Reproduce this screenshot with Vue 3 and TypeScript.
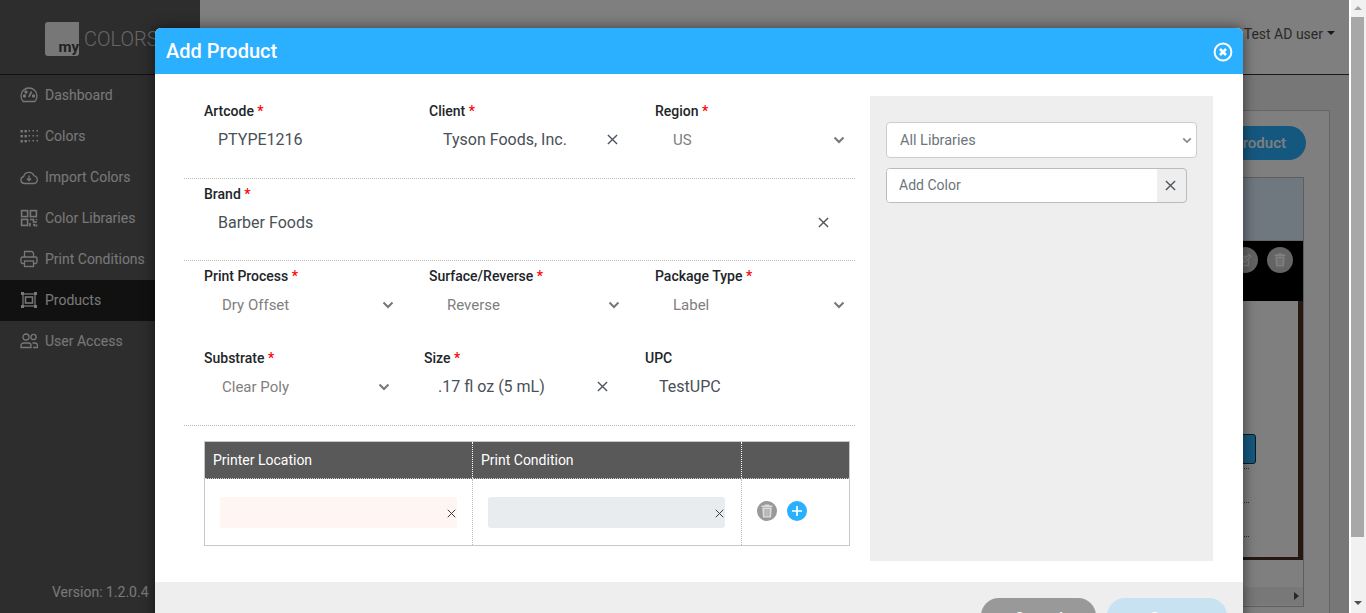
<script setup lang="ts">
interface NavItem {
  label: string;
  icon: string;
  active?: boolean;
}

const navItems: NavItem[] = [
  { label: 'Dashboard', icon: 'gauge' },
  { label: 'Colors', icon: 'dots' },
  { label: 'Import Colors', icon: 'cloud' },
  { label: 'Color Libraries', icon: 'qr' },
  { label: 'Print Conditions', icon: 'printer' },
  { label: 'Products', icon: 'frame', active: true },
  { label: 'User Access', icon: 'users' },
];

const dotPositions = [1, 5, 9, 13, 17];
</script>

<template>
  <div class="page">
    <aside class="sidebar">
      <div class="brand-bar">
        <div class="logo-box"><span>my</span></div>
        <span class="logo-word">COLORS</span>
      </div>
      <nav class="nav">
        <div v-for="item in navItems" :key="item.label" :class="['nav-item', { active: item.active }]">
          <svg class="nav-icon" viewBox="0 0 18 18" fill="none" stroke="currentColor" stroke-width="1.3">
            <template v-if="item.icon === 'gauge'">
              <path d="M3.2 15.5A8 8 0 1 1 14.8 15.5Z" />
              <path d="M9 11L11.5 5.5" stroke-width="1.8" />
              <circle cx="4.5" cy="10" r="1" fill="currentColor" />
              <circle cx="6" cy="6" r="1" fill="currentColor" />
              <circle cx="13.5" cy="10" r="1" fill="currentColor" />
            </template>
            <template v-else-if="item.icon === 'dots'">
              <template v-for="x in dotPositions" :key="x">
                <rect v-for="y in [3, 8, 13]" :key="y" :x="x - 0.5" :y="y" :width="x < 9 ? 2.4 : 1.5" :height="x < 9 ? 2.4 : 1.5" fill="currentColor" stroke="none" />
              </template>
            </template>
            <template v-else-if="item.icon === 'cloud'">
              <path d="M4.5 15.5A3.5 3.5 0 0 1 3.6 8.6 5.5 5.5 0 0 1 14 7.8 3.9 3.9 0 0 1 14 15.5Z" />
              <path d="M9 7.5V12.5M6.8 10.5L9 12.7 11.2 10.5" />
            </template>
            <template v-else-if="item.icon === 'qr'">
              <rect x="1.6" y="1.6" width="6" height="6" stroke-width="1.6" />
              <rect x="10.4" y="1.6" width="6" height="6" stroke-width="1.6" />
              <rect x="1.6" y="10.4" width="6" height="6" stroke-width="1.6" />
              <path d="M10 10.5h3.5v2.5H17M10 14v3.5M13 15.5h1.5v2M16.5 10v1M16.5 15.5v2" stroke-width="1.6" />
            </template>
            <template v-else-if="item.icon === 'printer'">
              <path d="M4.5 7V1.5H12L13.5 3V7" />
              <rect x="1" y="7" width="16" height="6.5" rx="1.5" />
              <rect x="4.5" y="11" width="9" height="5.5" fill="#5a5a5a" />
            </template>
            <template v-else-if="item.icon === 'frame'">
              <rect x="3" y="3" width="12" height="12" />
              <rect x="5.5" y="6" width="7" height="6" stroke-width="1.6" />
              <rect x="1" y="1" width="3" height="3" fill="currentColor" stroke="none" />
              <rect x="14" y="1" width="3" height="3" fill="currentColor" stroke="none" />
              <rect x="1" y="14" width="3" height="3" fill="currentColor" stroke="none" />
              <rect x="14" y="14" width="3" height="3" fill="currentColor" stroke="none" />
            </template>
            <template v-else>
              <circle cx="6" cy="5" r="3" />
              <path d="M1 15.5V13.5A2.5 2.5 0 0 1 3.5 11H8.5A2.5 2.5 0 0 1 11 13.5V15.5Z" />
              <circle cx="13.5" cy="5" r="2.6" />
              <path d="M12.5 11H15A2.5 2.5 0 0 1 17.5 13.5V15.5H13" />
            </template>
          </svg>
          <span>{{ item.label }}</span>
        </div>
      </nav>
      <div class="version">Version: 1.2.0.4</div>
    </aside>

    <main class="main">
      <header class="topbar">
        <span class="user">Test AD user</span>
        <span class="caret"></span>
      </header>
      <section class="content">
        <div class="card">
          <div class="card-actions">
            <button class="add-btn">Add Product</button>
          </div>
          <div class="list-box">
            <div class="list-head"></div>
            <div class="list-row">
              <span class="row-btn">
                <svg width="14" height="14" viewBox="0 0 14 14" fill="none" stroke="#fff" stroke-width="1.4">
                  <path d="M1.5 3.5H8M1.5 3.5V12.5H10.5V7" />
                  <path d="M5 9.5L5.6 7L11 1.5L12.8 3.2L7.4 8.8Z" />
                </svg>
              </span>
              <span class="row-btn">
                <svg width="12" height="14" viewBox="0 0 12 14" fill="#fff">
                  <path d="M4 0.5H8L8.6 1.6H11.5V3H0.5V1.6H3.4Z" />
                  <path fill-rule="evenodd" d="M1.3 3.6H10.7L10 13.5H2ZM3.6 5V12.2H4.6V5ZM5.5 5V12.2H6.5V5ZM7.4 5V12.2H8.4V5Z" />
                </svg>
              </span>
            </div>
            <div class="list-frame">
              <div class="frame-btn"></div>
              <div class="frame-dots"></div>
              <div class="frame-dots"></div>
              <div class="frame-dots"></div>
            </div>
            <div class="list-scroll"><span class="scroll-arrow"></span></div>
          </div>
        </div>
      </section>
    </main>

    <div class="overlay"></div>

    <div class="modal">
      <div class="modal-head">
        <h2>Add Product</h2>
        <svg class="close" width="20" height="20" viewBox="0 0 20 20" fill="none" stroke="#fff">
          <circle cx="10" cy="10" r="8.4" stroke-width="2" />
          <path d="M7 7L13 13M13 7L7 13" stroke-width="2.6" />
        </svg>
      </div>

      <div class="modal-body">
        <div class="form">
          <div class="form-row">
            <div class="field">
              <label>Artcode <em>*</em></label>
              <div class="control">PTYPE1216</div>
            </div>
            <div class="field">
              <label>Client <em>*</em></label>
              <div class="control">
                Tyson Foods, Inc.
                <svg class="x" viewBox="0 0 12 12"><path d="M1 1L11 11M11 1L1 11" /></svg>
              </div>
            </div>
            <div class="field">
              <label>Region <em>*</em></label>
              <div class="control pick">
                US
                <svg class="chev" viewBox="0 0 12 8"><path d="M1.5 1.5L6 6L10.5 1.5" /></svg>
              </div>
            </div>
          </div>

          <div class="form-row single">
            <div class="field wide">
              <label>Brand <em>*</em></label>
              <div class="control">
                Barber Foods
                <svg class="x" viewBox="0 0 12 12"><path d="M1 1L11 11M11 1L1 11" /></svg>
              </div>
            </div>
          </div>

          <div class="form-row no-line">
            <div class="field">
              <label>Print Process <em>*</em></label>
              <div class="control pick">
                Dry Offset
                <svg class="chev" viewBox="0 0 12 8"><path d="M1.5 1.5L6 6L10.5 1.5" /></svg>
              </div>
            </div>
            <div class="field">
              <label>Surface/Reverse <em>*</em></label>
              <div class="control pick">
                Reverse
                <svg class="chev" viewBox="0 0 12 8"><path d="M1.5 1.5L6 6L10.5 1.5" /></svg>
              </div>
            </div>
            <div class="field">
              <label>Package Type <em>*</em></label>
              <div class="control pick">
                Label
                <svg class="chev" viewBox="0 0 12 8"><path d="M1.5 1.5L6 6L10.5 1.5" /></svg>
              </div>
            </div>
          </div>

          <div class="form-row narrow">
            <div class="field tight">
              <label>Substrate <em>*</em></label>
              <div class="control pick">
                Clear Poly
                <svg class="chev" viewBox="0 0 12 8"><path d="M1.5 1.5L6 6L10.5 1.5" /></svg>
              </div>
            </div>
            <div class="field">
              <label>Size <em>*</em></label>
              <div class="control">
                .17 fl oz (5 mL)
                <svg class="x" viewBox="0 0 12 12"><path d="M1 1L11 11M11 1L1 11" /></svg>
              </div>
            </div>
            <div class="field">
              <label>UPC</label>
              <div class="control">TestUPC</div>
            </div>
          </div>

          <div class="printer-wrap">
            <table class="printer-table">
              <thead>
                <tr>
                  <th class="col-a">Printer Location</th>
                  <th class="col-b">Print Condition</th>
                  <th></th>
                </tr>
              </thead>
              <tbody>
                <tr>
                  <td>
                    <div class="cell-input invalid">
                      <svg class="x small" viewBox="0 0 12 12"><path d="M1 1L11 11M11 1L1 11" /></svg>
                    </div>
                  </td>
                  <td>
                    <div class="cell-input locked">
                      <svg class="x small" viewBox="0 0 12 12"><path d="M1 1L11 11M11 1L1 11" /></svg>
                    </div>
                  </td>
                  <td>
                    <div class="cell-actions">
                      <span class="round grey">
                        <svg width="12" height="14" viewBox="0 0 12 14" fill="#dcdcdc">
                          <path d="M4 0.5H8L8.6 1.6H11.5V3H0.5V1.6H3.4Z" />
                          <path fill-rule="evenodd" d="M1.3 3.6H10.7L10 13.5H2ZM3.6 5V12.2H4.6V5ZM5.5 5V12.2H6.5V5ZM7.4 5V12.2H8.4V5Z" />
                        </svg>
                      </span>
                      <span class="round blue">
                        <svg width="12" height="12" viewBox="0 0 12 12" stroke="#fff" stroke-width="1.7"><path d="M6 1V11M1 6H11" /></svg>
                      </span>
                    </div>
                  </td>
                </tr>
              </tbody>
            </table>
          </div>
        </div>

        <aside class="color-panel">
          <div class="lib-select">
            All Libraries
            <svg class="chev mini" viewBox="0 0 12 8"><path d="M1.5 1.5L6 6L10.5 1.5" /></svg>
          </div>
          <div class="add-color">
            <div class="add-input">Add Color</div>
            <div class="add-clear">
              <svg class="x" viewBox="0 0 12 12"><path d="M1 1L11 11M11 1L1 11" /></svg>
            </div>
          </div>
        </aside>
      </div>

      <div class="modal-foot">
        <span class="req">* Required Fields</span>
        <button class="foot-btn cancel">Cancel</button>
        <button class="foot-btn save">Save</button>
      </div>
    </div>

    <div class="fake-scrollbar">
      <span class="arrow up"></span>
      <span class="thumb"></span>
      <span class="arrow down"></span>
    </div>
  </div>
</template>

<style scoped>
* {
  box-sizing: border-box;
}

.page {
  position: relative;
  display: flex;
  width: 1366px;
  height: 613px;
  overflow: hidden;
  font-family: Roboto, "Liberation Sans", sans-serif;
  font-size: 14px;
  color: #212529;
  background: #eee;
}

/* sidebar */
.sidebar {
  position: relative;
  flex: 0 0 200px;
  background: #5a5a5a;
  color: #f0f0f0;
}

.brand-bar {
  display: flex;
  align-items: center;
  gap: 5px;
  height: 75px;
  padding: 3px 0 0 45px;
  border-bottom: 1px solid #222;
}

.logo-box {
  display: flex;
  align-items: flex-end;
  justify-content: flex-end;
  width: 34px;
  height: 34px;
  border-radius: 3px 0 3px 3px;
  background: #efefef;
  color: #444;
  font-size: 15px;
  font-weight: 700;
  line-height: 18px;
}

.logo-word {
  font-size: 20px;
  font-weight: 300;
  color: #ccc;
}

.nav-item {
  display: flex;
  align-items: center;
  gap: 7px;
  height: 41px;
  padding: 0 0 2px 20px;
  font-size: 14px;
}

.nav-item.active {
  background: #222;
}

.nav-icon {
  width: 18px;
  height: 18px;
  flex: none;
}

.version {
  position: absolute;
  left: 52px;
  top: 584px;
  font-size: 14px;
  color: #f0f0f0;
  line-height: 16px;
}

/* page behind the dialog */
.main {
  flex: 1;
  min-width: 0;
  padding-right: 17px;
}

.topbar {
  display: flex;
  align-items: center;
  justify-content: flex-end;
  gap: 4px;
  height: 75px;
  padding: 0 14px 7px 0;
  background: #fff;
  border-bottom: 1px solid #333;
  color: #555;
}

.caret {
  width: 0;
  height: 0;
  margin-top: -2px;
  border: 4px solid transparent;
  border-top-color: #333;
  border-bottom: 0;
}

.content {
  height: 538px;
  padding: 35px 19px 0 20px;
}

.card {
  height: 520px;
  padding: 15px 25px 0 20px;
  background: #fff;
  border: 1px solid #ccc;
}

.card-actions {
  display: flex;
  justify-content: flex-end;
  margin-right: -2px;
}

.add-btn {
  height: 34px;
  padding: 0 20px;
  border: 0;
  border-radius: 17px;
  background: #2bb0ff;
  color: #fff;
  font: 500 15px Roboto, sans-serif;
}

.list-box {
  margin-top: 17px;
  height: 430px;
  border: 1px solid #bbb;
}

.list-head {
  height: 62px;
  background: #dfeeff;
}

.list-row {
  display: flex;
  justify-content: flex-end;
  gap: 9px;
  height: 61px;
  padding: 6px 10px 0 0;
  background: #000;
  border-top: 1px solid #ccc;
}

.row-btn {
  display: flex;
  align-items: center;
  justify-content: center;
  width: 26px;
  height: 26px;
  border-radius: 50%;
  background: #c8c8c8;
}

.list-frame {
  display: flex;
  flex-direction: column;
  align-items: flex-end;
  height: 259px;
  padding: 133px 0 0;
  border-right: 5px solid #4a3020;
  border-bottom: 3px solid #4a3020;
}

.frame-btn {
  width: 70px;
  height: 30px;
  margin-right: 42px;
  border: 1px solid #14344a;
  border-radius: 3px;
  background: #2bb0ff;
}

.frame-dots {
  width: 40px;
  height: 1px;
  margin: 33px 49px 0 0;
  border-top: 1px dotted #555;
}

.frame-dots:nth-child(2) {
  margin-top: 4px;
}

.list-scroll {
  display: flex;
  align-items: center;
  justify-content: flex-end;
  height: 18px;
  margin-top: 27px;
  padding-right: 4px;
  background: #f1f1f1;
}

.scroll-arrow {
  width: 0;
  height: 0;
  border: 4px solid transparent;
  border-left: 5px solid #505050;
  border-right: 0;
}

.overlay {
  position: absolute;
  top: 0;
  left: 0;
  right: 17px;
  bottom: 0;
  background: rgba(0, 0, 0, 0.5);
}

.fake-scrollbar {
  position: absolute;
  top: 0;
  right: 0;
  width: 17px;
  height: 613px;
  border-left: 2px solid #fff;
  background: #f1f1f1;
}

.thumb {
  position: absolute;
  top: 17px;
  left: 0;
  width: 13px;
  height: 520px;
  background: #a8a8a8;
}

.arrow {
  position: absolute;
  left: 3px;
  width: 0;
  height: 0;
  border-left: 4px solid transparent;
  border-right: 4px solid transparent;
}

.arrow.up {
  top: 6px;
  border-bottom: 4px solid #a3a3a3;
}

.arrow.down {
  top: 601px;
  border-top: 4px solid #505050;
}

/* dialog */
.modal {
  position: absolute;
  top: 28px;
  left: 155px;
  width: 1088px;
  background: #fff;
  border-radius: 6px 6px 0 0;
  box-shadow: 0 0 14px rgba(0, 0, 0, 0.55);
}

.modal-head {
  display: flex;
  align-items: center;
  justify-content: space-between;
  height: 46px;
  padding: 0 10px 0 11px;
  background: #2bb0ff;
  border-radius: 6px 6px 0 0;
}

.modal-head h2 {
  margin: 0;
  font-size: 20px;
  font-weight: 500;
  color: #fff;
}

.close {
  margin-top: 2px;
}

.modal-body {
  display: flex;
  gap: 15px;
  height: 508px;
  padding: 22px 30px 21px 29px;
}

.form {
  width: 671px;
  flex: none;
}

.form-row {
  display: grid;
  grid-template-columns: 225px 226px 225px;
  height: 83px;
  padding: 5px 0 0 20px;
  border-bottom: 1px dotted #bbb;
}

.form-row.single {
  display: block;
  height: 82px;
}

.form-row.no-line {
  height: 82px;
  border-bottom: 0;
}

.form-row.narrow {
  grid-template-columns: 220px 221px 200px;
  height: 83px;
}

.field {
  padding-right: 35px;
}

.field.tight {
  padding-right: 34px;
}

.field.wide {
  padding-right: 24px;
}

.field label {
  display: block;
  height: 21px;
  font-size: 14px;
  font-weight: 500;
  line-height: 21px;
}

.field em {
  color: #f00;
  font-style: normal;
}

.control {
  display: flex;
  align-items: center;
  justify-content: space-between;
  height: 35px;
  padding-left: 14px;
  font-size: 16px;
  color: #495057;
}

.control.pick {
  padding-left: 18px;
  font-size: 15px;
  color: #808080;
}

.control > .x {
  margin-right: 2px;
}

.x {
  flex: none;
  width: 11px;
  height: 11px;
  fill: none;
  stroke: #4d555c;
  stroke-width: 1.5;
}

.x.small {
  width: 9px;
  height: 9px;
  stroke: #343a40;
  stroke-width: 1.3;
}

.chev {
  flex: none;
  width: 12px;
  height: 8px;
  fill: none;
  stroke: #777;
  stroke-width: 2;
}

.chev.mini {
  width: 10px;
  height: 7px;
  stroke: #888;
}

.printer-wrap {
  padding: 15px 5px 0 20px;
}

.printer-table {
  width: 646px;
  border: 1px solid #c8c8c8;
  border-collapse: collapse;
  table-layout: fixed;
}

.printer-table th {
  height: 37px;
  padding: 0 8px;
  background: #595959;
  color: #fff;
  font-size: 14px;
  font-weight: 400;
  text-align: left;
  border-left: 1px dotted #fff;
  border-bottom: 1px dotted #ccc;
}

.printer-table th:first-child {
  border-left: 0;
}

.col-a {
  width: 268px;
}

.col-b {
  width: 269px;
}

.printer-table td {
  height: 67px;
  padding: 0 15px;
  border-left: 1px dotted #bbb;
}

.printer-table td:first-child {
  border-left: 0;
}

.cell-input {
  display: flex;
  align-items: center;
  justify-content: flex-end;
  width: 237px;
  height: 31px;
  padding: 2px 1px 0 0;
  border-radius: 3px;
}

.cell-input.invalid {
  background: #fff5f3;
}

.cell-input.locked {
  background: #e9ecef;
}

.cell-actions {
  display: flex;
  gap: 10px;
  margin-top: -2px;
}

.round {
  display: flex;
  align-items: center;
  justify-content: center;
  width: 20px;
  height: 20px;
  border-radius: 50%;
}

.round.grey {
  background: #999;
}

.round.blue {
  background: #2bb0ff;
}

.color-panel {
  flex: none;
  width: 343px;
  height: 465px;
  padding: 26px 16px;
  background: #eee;
}

.lib-select {
  display: flex;
  align-items: center;
  justify-content: space-between;
  height: 36px;
  padding: 0 4px 0 13px;
  background: #fff;
  border: 1px solid #ccc;
  border-radius: 4px;
  font-size: 14.5px;
  color: #6c757d;
}

.add-color {
  display: flex;
  width: 301px;
  height: 35px;
  margin-top: 10px;
  background: #eee;
  border: 1px solid #bbb;
  border-radius: 4px;
  overflow: hidden;
}

.add-input {
  flex: 1;
  padding-left: 12px;
  background: #fff;
  font-size: 14px;
  line-height: 33px;
  color: #6c757d;
}

.add-clear {
  display: flex;
  align-items: center;
  justify-content: center;
  width: 29px;
  padding-right: 2px;
}

.modal-foot {
  display: flex;
  gap: 11px;
  height: 60px;
  padding: 16px 16px 0 16px;
  background: #eee;
}

.req {
  margin-right: auto;
  padding-top: 11px;
  font-size: 14px;
  line-height: 20px;
  color: #555;
}

.foot-btn {
  height: 40px;
  padding: 0;
  border: 0;
  border-radius: 18px;
  color: #fff;
  font: 500 16px Roboto, sans-serif;
}

.foot-btn.cancel {
  width: 115px;
  background: #999;
}

.foot-btn.save {
  width: 120px;
  background: #c8e2f2;
}
</style>

<style>
html,
body {
  margin: 0;
  overflow: hidden;
}
</style>
